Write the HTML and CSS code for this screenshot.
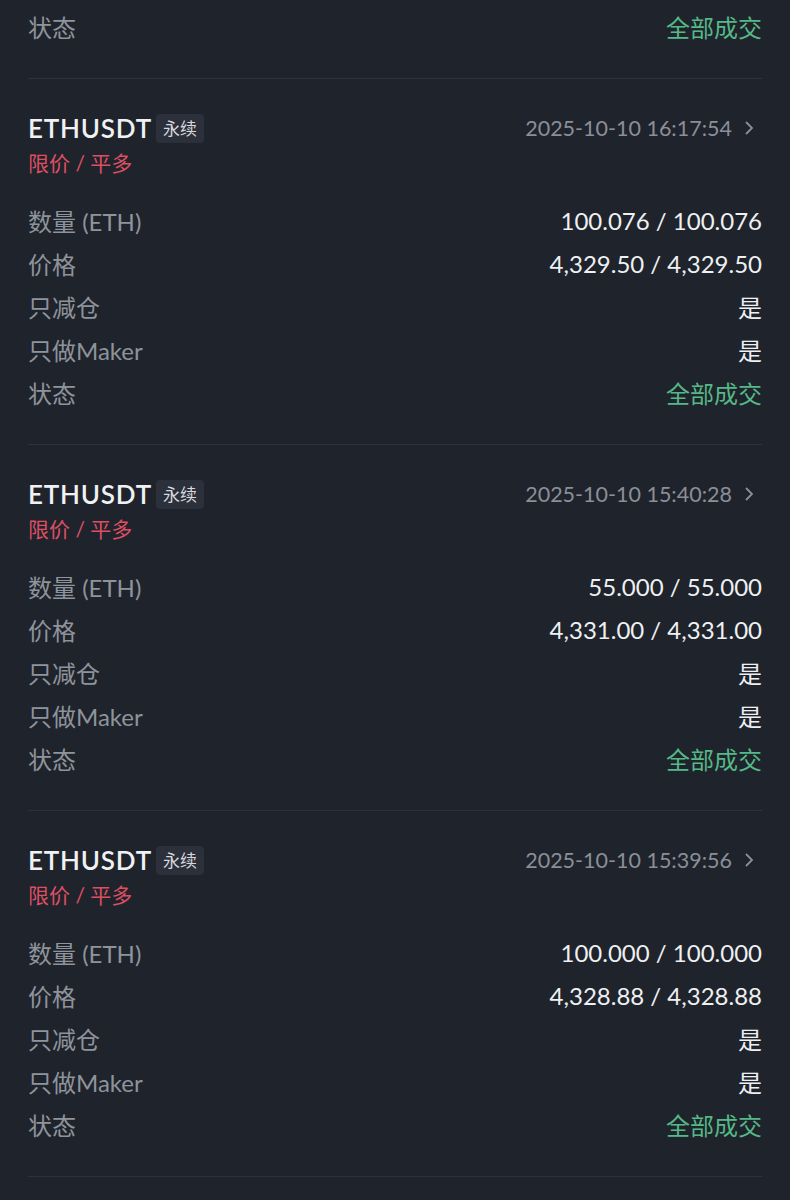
FILE: index.html
```html
<!DOCTYPE html>
<html>
<head>
  <title>委托历史</title>
  <meta charset="UTF-8">
  <link rel="stylesheet" href="styles.css">
</head>
<body>
  <div class="order-list">
    <!-- 上一条记录的尾部 -->
    <div class="order order-tail">
      <div class="rows">
        <div class="row"><span class="label">状态</span><span class="value filled">全部成交</span></div>
      </div>
    </div>

    <div class="order">
      <div class="order-head">
        <div class="symbol">ETHUSDT <span class="tag">永续</span></div>
        <div class="time">2025-10-10 16:17:54 <svg class="chevron" viewBox="0 0 12 16"><path d="M3 2l6 6-6 6"/></svg></div>
      </div>
      <div class="side">限价 / 平多</div>
      <div class="rows">
        <div class="row"><span class="label">数量 (ETH)</span><span class="value">100.076 / 100.076</span></div>
        <div class="row"><span class="label">价格</span><span class="value">4,329.50 / 4,329.50</span></div>
        <div class="row"><span class="label">只减仓</span><span class="value">是</span></div>
        <div class="row"><span class="label">只做Maker</span><span class="value">是</span></div>
        <div class="row"><span class="label">状态</span><span class="value filled">全部成交</span></div>
      </div>
    </div>

    <div class="order">
      <div class="order-head">
        <div class="symbol">ETHUSDT <span class="tag">永续</span></div>
        <div class="time">2025-10-10 15:40:28 <svg class="chevron" viewBox="0 0 12 16"><path d="M3 2l6 6-6 6"/></svg></div>
      </div>
      <div class="side">限价 / 平多</div>
      <div class="rows">
        <div class="row"><span class="label">数量 (ETH)</span><span class="value">55.000 / 55.000</span></div>
        <div class="row"><span class="label">价格</span><span class="value">4,331.00 / 4,331.00</span></div>
        <div class="row"><span class="label">只减仓</span><span class="value">是</span></div>
        <div class="row"><span class="label">只做Maker</span><span class="value">是</span></div>
        <div class="row"><span class="label">状态</span><span class="value filled">全部成交</span></div>
      </div>
    </div>

    <div class="order">
      <div class="order-head">
        <div class="symbol">ETHUSDT <span class="tag">永续</span></div>
        <div class="time">2025-10-10 15:39:56 <svg class="chevron" viewBox="0 0 12 16"><path d="M3 2l6 6-6 6"/></svg></div>
      </div>
      <div class="side">限价 / 平多</div>
      <div class="rows">
        <div class="row"><span class="label">数量 (ETH)</span><span class="value">100.000 / 100.000</span></div>
        <div class="row"><span class="label">价格</span><span class="value">4,328.88 / 4,328.88</span></div>
        <div class="row"><span class="label">只减仓</span><span class="value">是</span></div>
        <div class="row"><span class="label">只做Maker</span><span class="value">是</span></div>
        <div class="row"><span class="label">状态</span><span class="value filled">全部成交</span></div>
      </div>
    </div>
  </div>
</body>
</html>
```

FILE: styles.css
```css
html, body {
  background-color: #1f232b;
}
body {
  font-family: Lato, "Noto Sans CJK SC", sans-serif;
  color: #eaecef;
  margin: 0;
  padding: 5px 28px 0;
}
.order {
  padding: 34px 0 30px;
  border-bottom: 1px solid #2d323b;
}
.order-tail {
  padding-top: 0;
}
.order-head {
  display: flex;
  justify-content: space-between;
  align-items: center;
  height: 30px;
}
.symbol {
  display: flex;
  align-items: center;
  gap: 4px;
  font-size: 26px;
  font-weight: 600;
  letter-spacing: 0.8px;
  color: #f0f1f3;
}
.tag {
  display: inline-block;
  height: 29px;
  line-height: 29px;
  padding: 0 7px;
  border-radius: 4px;
  background-color: #2b303a;
  color: #d5d8dd;
  font-size: 17px;
  font-weight: 400;
  letter-spacing: 0;
}
.time {
  display: flex;
  align-items: center;
  gap: 11px;
  margin-right: 7px;
  font-size: 21.5px;
  color: #8a8f98;
}
.chevron {
  width: 12px;
  height: 16px;
  fill: none;
  stroke: #8a8f98;
  stroke-width: 1.8;
}
.side {
  margin-top: 5px;
  line-height: 30px;
  font-size: 21px;
  color: #dc4f63;
}
.rows {
  margin-top: 21px;
}
.order-tail .rows {
  margin-top: 0;
}
.row {
  display: flex;
  justify-content: space-between;
  align-items: center;
  height: 43px;
  font-size: 24px;
}
.label {
  color: #8e939c;
}
.value {
  color: #eef0f2;
}
.value.filled {
  color: #55b987;
}
```
